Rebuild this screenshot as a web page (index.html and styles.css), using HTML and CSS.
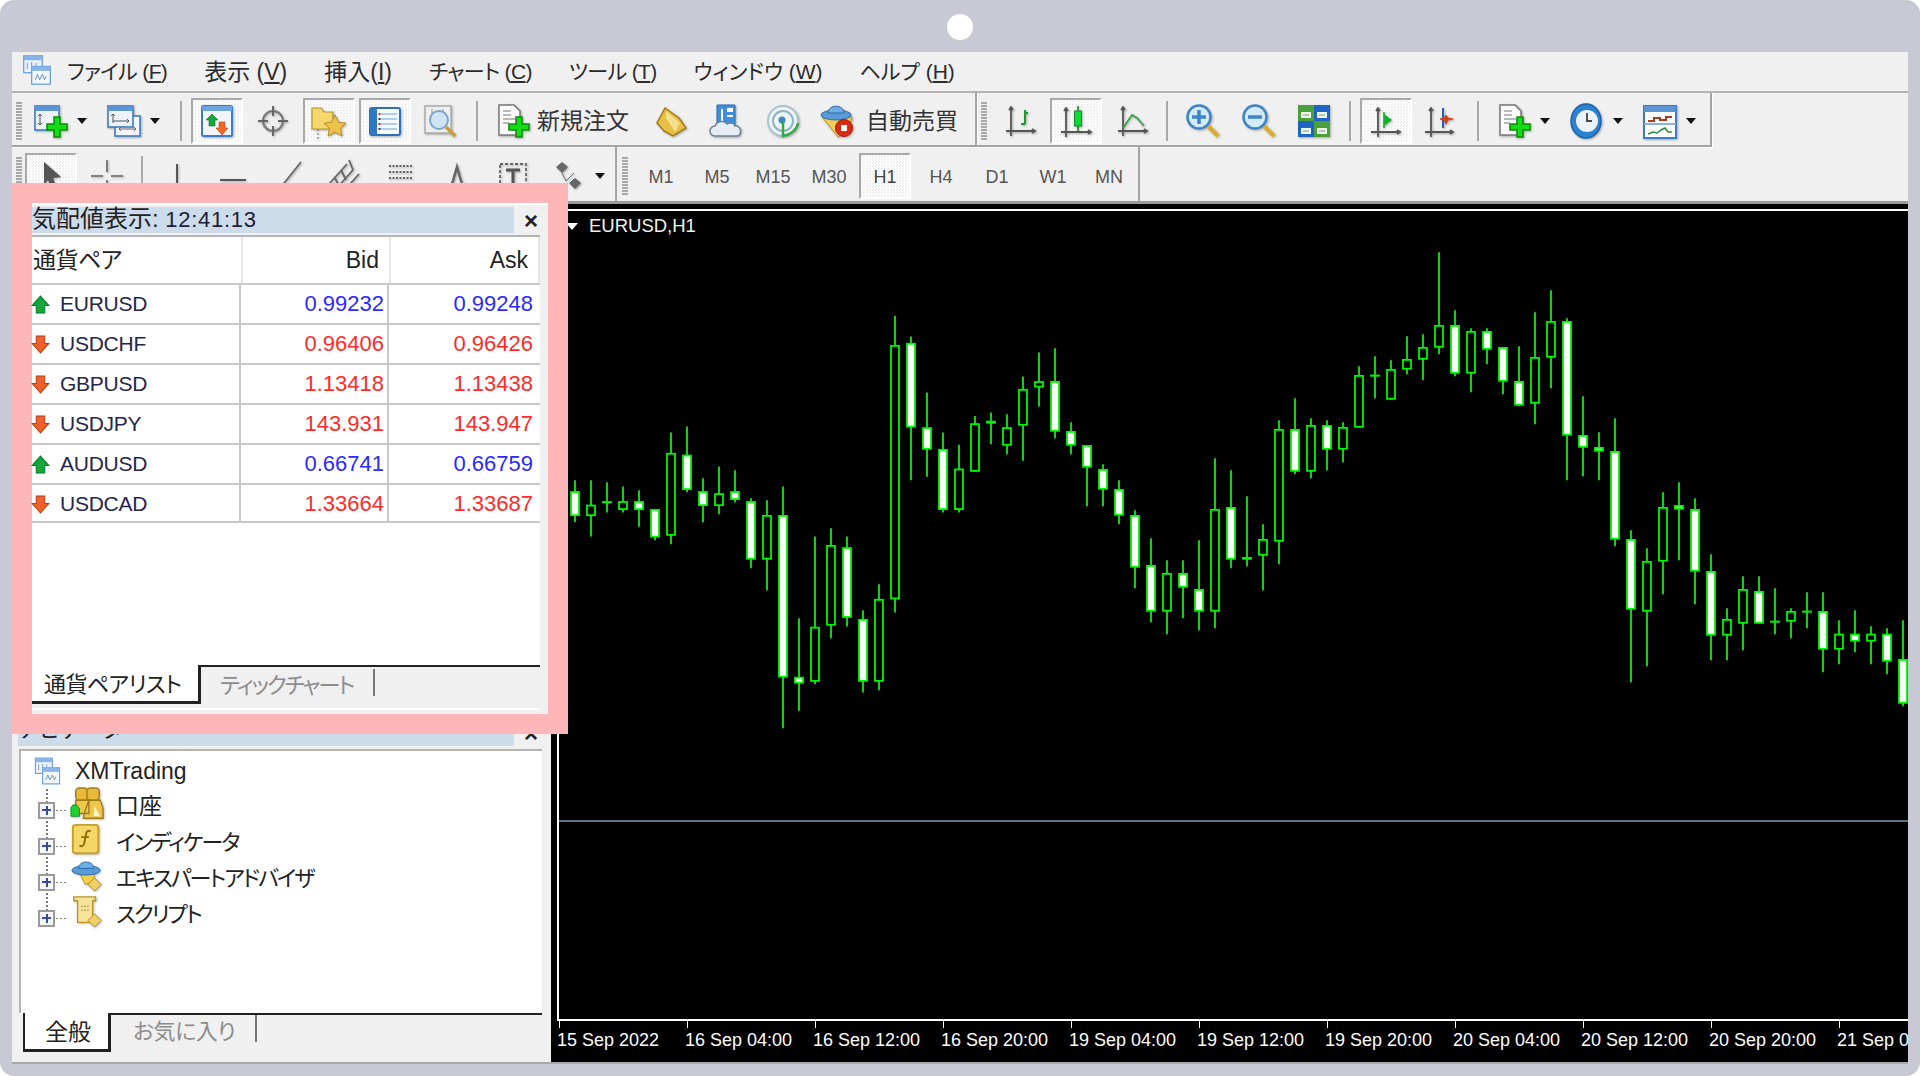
FILE: index.html
```html
<!DOCTYPE html>
<html lang="ja">
<head>
<meta charset="utf-8">
<title>MetaTrader 4</title>
<link rel="stylesheet" href="styles.css">
</head>
<body>
<svg class="defs" aria-hidden="true">
  <defs>
    <path id="plus" d="M7 0h6v7h7v6h-7v7H7v-7H0V7h7z" fill="#14dc14" stroke="#0a8f0a" stroke-width="1.6"/>
    <symbol id="s-app" viewBox="0 0 36 36">
      <rect x="3" y="2" width="21" height="19" fill="#eaf2fb" stroke="#6fa3dc" stroke-width="1.5"/><rect x="3" y="2" width="21" height="5" fill="#86b4e6"/>
      <path d="M7 10v7M12 9v7M17 10v6" stroke="#6b8fc0" fill="none"/>
      <rect x="12" y="14" width="21" height="20" fill="#f3f8fd" stroke="#6fa3dc" stroke-width="1.5"/><rect x="12" y="14" width="21" height="5" fill="#86b4e6"/>
      <path d="M16 29l2.500-6 2.500 6 3-6 2.500 6 2-4" stroke="#5a7fb0" fill="none"/>
    </symbol>
    <symbol id="s-new" viewBox="0 0 36 36">
      <rect x="2" y="3" width="24" height="24" fill="#edf3fa" stroke="#3d7cc0" stroke-width="1.6"/><rect x="2" y="3" width="24" height="5" fill="#5a94d4"/>
      <path d="M7 11v11M5 13l2-2 2 2M5 20l2 2 2-2" stroke="#555" fill="none"/>
      <use href="#plus" x="14" y="14"/>
    </symbol>
    <symbol id="s-prof" viewBox="0 0 36 36">
      <rect x="9" y="13" width="25" height="20" fill="#f2f6fb" stroke="#3d7cc0" stroke-width="1.6"/>
      <path d="M13 26h17M15 24l-2 2 2 2M28 24l2 2-2 2" stroke="#666" fill="none"/>
      <rect x="2" y="3" width="25" height="21" fill="#edf3fa" stroke="#3d7cc0" stroke-width="1.6"/><rect x="2" y="3" width="25" height="5" fill="#5a94d4"/>
      <path d="M7 11v9M5 13l2-2 2 2M7 18h16M21 16l2 2-2 2" stroke="#555" fill="none"/>
    </symbol>
    <symbol id="s-mw" viewBox="0 0 36 36">
      <rect x="3" y="3" width="30" height="30" rx="1.500" fill="#f1f5fa" stroke="#3d7cc0" stroke-width="2"/><rect x="3" y="3" width="30" height="5" fill="#6fa5de"/>
      <path d="M13 11l6 6h-3v6h-6v-6H7z" fill="#12a83c" stroke="#0b7a2a" stroke-width=".6"/>
      <path d="M20 19h6v6h3l-6 7-6-7h3z" fill="#f0672c" stroke="#b8431a" stroke-width=".6"/>
    </symbol>
    <symbol id="s-aim" viewBox="0 0 36 36">
      <circle cx="18" cy="18" r="10" fill="none" stroke="#777" stroke-width="2"/>
      <path d="M18 3v10M18 23v10M3 18h10M23 18h10" stroke="#666" stroke-width="2"/>
    </symbol>
    <symbol id="s-fav" viewBox="0 0 36 36">
      <path d="M7 26v10" stroke="#666" stroke-dasharray="2 2"/>
      <path d="M1 5h9l3 4h9v17H1z" fill="#f5d76e" stroke="#b89430" stroke-width="1.2"/>
      <path d="M24 12l3.600 7.200 7.400 1-5.400 5 1.400 7.800-7-3.800-7 3.800 1.400-7.800-5.400-5 7.400-1z" fill="#edc24a" stroke="#b0892a"/>
    </symbol>
    <symbol id="s-nav" viewBox="0 0 36 36">
      <rect x="3" y="5" width="30" height="27" rx="2" fill="#f6f9fd" stroke="#2f6fb8" stroke-width="2"/><rect x="3" y="5" width="7" height="27" fill="#2f77c4"/>
      <path d="M14 11h16M14 16h16M14 21h16M14 26h16" stroke="#9bbfe2" stroke-width="1.500"/>
      <path d="M11.500 10h2v2h-2zM11.500 20h2v2h-2z" fill="#e02020"/><path d="M11.500 15h2v2h-2zM11.500 25h2v2h-2z" fill="#333"/>
    </symbol>
    <symbol id="s-find" viewBox="0 0 36 36">
      <rect x="2" y="3" width="26" height="27" fill="#eee" stroke="#aaa" stroke-width="1.500"/>
      <path d="M9 6v12M20 6v12" stroke="#888"/>
      <circle cx="16" cy="17" r="9" fill="#cfe3f4" stroke="#7ba6c8" stroke-width="2"/>
      <path d="M23 24l9 9" stroke="#c9a02c" stroke-width="3.500"/>
    </symbol>
    <symbol id="s-order" viewBox="0 0 36 36">
      <path d="M4 2h15l6 6v24H4z" fill="#fbfbfb" stroke="#777" stroke-width="1.500"/>
      <path d="M8 8h8M8 12h8M8 16h12M8 20h6" stroke="#777"/>
      <use href="#plus" x="14" y="14"/>
    </symbol>
    <symbol id="s-gold" viewBox="0 0 36 36">
      <path d="M12 5l14 10 7 10-13 8-9-5-7-8z" fill="#e7bf46" stroke="#a47c16" stroke-width="1.500"/>
      <path d="M13 8l14 12-5 9-9-14z" fill="#f6e08c"/>
    </symbol>
    <symbol id="s-cloud" viewBox="0 0 36 36">
      <path d="M8 2h18v20H8z" fill="#3f8fe0" stroke="#2a6cb4"/><path d="M18 5h6v4h-6zM18 12h6v2h-6z" fill="#fff"/><path d="M13 6v13" stroke="#fff" stroke-width="2"/>
      <path d="M6 33a5 5 0 0 1 0-10c2-5 9-6 12-2 3-2 7-1 8 2 6-1 8 9 2 10z" fill="#e6ecf3" stroke="#6d8196" stroke-width="1.500"/>
    </symbol>
    <symbol id="s-signal" viewBox="0 0 36 36">
      <circle cx="18" cy="18" r="15" fill="#eef4f7" stroke="#a9c4cf" stroke-width="2"/>
      <circle cx="18" cy="18" r="10" fill="none" stroke="#8fb4c6" stroke-width="2"/>
      <circle cx="17" cy="17" r="3.500" fill="#3f87c4"/>
      <path d="M18 18v15c7-1 14-6 15-13" fill="none" stroke="#3aa64a" stroke-width="2.500"/>
    </symbol>
    <symbol id="s-auto" viewBox="0 0 36 36">
      <path d="M3 14L19 34l11-8 3-12z" fill="#f1cd55" stroke="#b8922a"/>
      <ellipse cx="17" cy="12" rx="15" ry="5" fill="#5a9ad8" stroke="#2d6aa6"/>
      <path d="M9 10c0-9 16-9 16 0z" fill="#6eaee6" stroke="#2d6aa6"/>
      <circle cx="25" cy="25" r="8.500" fill="#d92a12" stroke="#a31a0a"/><rect x="22" y="22" width="6" height="6" fill="#fff"/>
    </symbol>
    <symbol id="s-bar" viewBox="0 0 36 36">
      <path d="M9 4v29M4 28h29M7 7l2-3 2 3M30 26l3 2-3 2" stroke="#555" stroke-width="1.800" fill="none"/>
      <path d="M23 7v14M19 21h4M23 10h3" stroke="#1a9a2a" stroke-width="2" fill="none"/>
    </symbol>
    <symbol id="s-candle" viewBox="0 0 36 36">
      <path d="M8 5v29M3 29h30M6 8l2-3 2 3M30 27l3 2-3 2" stroke="#555" stroke-width="1.800" fill="none"/>
      <path d="M20 3v25" stroke="#1a7a2a" stroke-width="1.500"/><rect x="16.500" y="8" width="7" height="15" fill="#12d83c" stroke="#0d8f2a"/>
    </symbol>
    <symbol id="s-line" viewBox="0 0 36 36">
      <path d="M9 4v29M4 28h29M7 7l2-3 2 3M30 26l3 2-3 2" stroke="#555" stroke-width="1.800" fill="none"/>
      <path d="M9 25l9-13 5 3 7 8" stroke="#3aa04a" stroke-width="1.800" fill="none"/>
    </symbol>
    <symbol id="s-zin" viewBox="0 0 36 36">
      <circle cx="15" cy="14" r="11.500" fill="#d4ecfa" stroke="#3f85c6" stroke-width="2.500"/>
      <path d="M15 7v14M8 14h14" stroke="#3f85c6" stroke-width="3.500"/>
      <path d="M24 23l10 10" stroke="#d4ad32" stroke-width="4"/>
    </symbol>
    <symbol id="s-zout" viewBox="0 0 36 36">
      <circle cx="15" cy="14" r="11.500" fill="#d4ecfa" stroke="#3f85c6" stroke-width="2.500"/>
      <path d="M8 14h14" stroke="#3f85c6" stroke-width="3.500"/>
      <path d="M24 23l10 10" stroke="#d4ad32" stroke-width="4"/>
    </symbol>
    <symbol id="s-tile" viewBox="0 0 36 36">
      <rect x="2" y="2" width="16" height="16" fill="#4aa03a"/><rect x="18" y="2" width="16" height="16" fill="#1f64c0"/>
      <rect x="2" y="18" width="16" height="16" fill="#1f64c0"/><rect x="18" y="18" width="16" height="16" fill="#4aa03a"/>
      <path d="M5 9h10v6H5zM21 9h10v6H21zM5 25h10v6H5zM21 25h10v6H21z" fill="#eef4ee"/>
      <path d="M7 12h6M23 12h6M7 28h6M23 28h6" stroke="#7c9a7c"/>
    </symbol>
    <symbol id="s-auto-scroll" viewBox="0 0 36 36">
      <path d="M10 5v29M3 29h29M8 8l2-3 2 3M29 27l3 2-3 2" stroke="#555" stroke-width="1.800" fill="none"/>
      <path d="M16 9v16" stroke="#1a9a2a" stroke-width="1.500"/><path d="M16 11l8 6-8 6z" fill="#18b030"/>
    </symbol>
    <symbol id="s-shift" viewBox="0 0 36 36">
      <path d="M7 5v29M1 29h28M5 8l2-3 2 3M26 27l3 2-3 2" stroke="#555" stroke-width="1.800" fill="none"/>
      <path d="M19 5v20" stroke="#2a62b0" stroke-width="2"/>
      <path d="M22 12l2 3 5 1-5 1-2 4-2-4-4-1 4-1z" fill="#d8401a" stroke="#d8401a"/>
    </symbol>
    <symbol id="s-clock" viewBox="0 0 36 36">
      <ellipse cx="17" cy="18" rx="15" ry="17" fill="#2a82d0" stroke="#1a64ac" stroke-width="1.500"/>
      <circle cx="18" cy="18" r="11" fill="#edf3f8"/>
      <path d="M18 10v8h5" stroke="#444" stroke-width="1.800" fill="none"/>
    </symbol>
    <symbol id="s-tmpl" viewBox="0 0 36 36">
      <rect x="2" y="3" width="32" height="32" fill="#fff" stroke="#3d7cc0" stroke-width="2"/><rect x="2" y="3" width="32" height="6" fill="#5a94d4"/><rect x="2" y="20" width="32" height="2" fill="#8bb3dc"/>
      <path d="M6 18h6v-3h6v2h6v-3h6" stroke="#a83a1e" stroke-width="2" fill="none"/>
      <path d="M6 31l5-2 4 1 4-3 4-2 3 4h4" stroke="#2a8c3a" stroke-width="1.500" fill="none"/>
    </symbol>
    <symbol id="s-cursor" viewBox="0 0 36 36"><path d="M11 4l17 15-8 1 5 12-5 2-5-12-4 5z" fill="#555"/></symbol>
    <symbol id="s-cross" viewBox="0 0 36 36"><path d="M18 2v12M18 22v12M2 18h12M22 18h12" stroke="#666" stroke-width="1.600"/></symbol>
    <symbol id="s-vl" viewBox="0 0 36 36"><path d="M18 6v28" stroke="#555" stroke-width="2"/></symbol>
    <symbol id="s-hl" viewBox="0 0 36 36"><path d="M5 22h26" stroke="#555" stroke-width="2"/></symbol>
    <symbol id="s-dl" viewBox="0 0 36 36"><path d="M6 34L30 4" stroke="#666" stroke-width="1.800"/></symbol>
    <symbol id="s-chan" viewBox="0 0 36 36"><path d="M2 26L20 6M8 32L26 12M14 36L32 16M22 2l4 10M14 12l5 10M8 20l4 8" stroke="#666" stroke-width="1.800" fill="none"/></symbol>
    <symbol id="s-fib" viewBox="0 0 36 36"><path d="M6 8h24M6 14h24M6 20h24M6 26h24" stroke="#666" stroke-width="1.800" stroke-dasharray="2 1.500"/></symbol>
    <symbol id="s-tri" viewBox="0 0 36 36"><path d="M18 9l7 24H11z" fill="none" stroke="#666" stroke-width="2.500"/></symbol>
    <symbol id="s-tbox" viewBox="0 0 36 36"><path d="M5 6h26v26H5z" fill="none" stroke="#666" stroke-width="1.800" stroke-dasharray="3 2"/><path d="M11 12h14M18 12v20" stroke="#555" stroke-width="3"/></symbol>
    <symbol id="s-shapes" viewBox="0 0 36 36"><path d="M11 4l6 5-6 6-6-6zM24 20l6 5-6 6-6-6z" fill="#666"/><path d="M11 15l4 8 8-8" stroke="#666" fill="none"/></symbol>
    <symbol id="s-up" viewBox="0 0 18 18"><path d="M9 1l8 9h-4v7H5v-7H1z" fill="#12a83c" stroke="#0b7a2a"/></symbol>
    <symbol id="s-down" viewBox="0 0 18 18"><path d="M5 1h8v7h4l-8 9-8-9h4z" fill="#f0602a" stroke="#b8431a"/></symbol>
    <symbol id="s-acct" viewBox="0 0 36 36">
      <rect x="6" y="1" width="13" height="13" rx="4" fill="#e8b93c" stroke="#a07c18" stroke-width="1.500"/>
      <rect x="18" y="1" width="13" height="13" rx="4" fill="#e8b93c" stroke="#a07c18" stroke-width="1.500"/>
      <path d="M6 14h14v14H6zM20 14h12l3 8v11H14l2-8z" fill="#edc64e" stroke="#a07c18" stroke-width="1.500"/>
      <path d="M26 20l6 11h-7z" fill="#fff3c0"/>
      <path d="M3 19h4l3 4v8H1v-9z" fill="#20d030" stroke="#12902a"/>
    </symbol>
    <symbol id="s-func" viewBox="0 0 36 36">
      <rect x="3" y="2" width="27" height="30" rx="3" fill="#f5d767" stroke="#c29f30" stroke-width="2"/>
      <path d="M22 9c-3-2-5 0-5 3l-2 10c-1 3-3 3-5 2M12 15h8" stroke="#8a6a10" stroke-width="2" fill="none"/>
    </symbol>
    <symbol id="s-expert" viewBox="0 0 36 36">
      <path d="M10 14l6 13 8-3 3-10z" fill="#f3d148" stroke="#b8922a"/>
      <ellipse cx="17" cy="12" rx="15" ry="5" fill="#5a9ad8" stroke="#2d6aa6"/>
      <path d="M9 10c0-9 16-9 16 0z" fill="#6eaee6" stroke="#2d6aa6"/>
      <path d="M26 20l7 7-7 7-7-7z" fill="#f0cf66" stroke="#b08a20"/>
    </symbol>
    <symbol id="s-script" viewBox="0 0 36 36">
      <path d="M4 2h23v4h-3v19l-3 4H8V6H4z" fill="#f7e39a" stroke="#b8962c" stroke-width="1.500"/>
      <path d="M12 12h8M12 16h8" stroke="#a08a40" stroke-dasharray="2 1"/>
      <path d="M26 20l7 7-7 7-7-7z" fill="#f0cf66" stroke="#b08a20"/>
    </symbol>
  </defs>
</svg>

<div class="frame">
  <div class="camera"></div>
  <div class="window">
    <nav class="menubar">
      <svg class="app-logo"><use href="#s-app"/></svg>
      <span class="menu-item kana">ファイル (<u>F</u>)</span>
      <span class="menu-item kanji">表示 (<u>V</u>)</span>
      <span class="menu-item kanji">挿入(<u>I</u>)</span>
      <span class="menu-item kana">チャート (<u>C</u>)</span>
      <span class="menu-item kana">ツール (<u>T</u>)</span>
      <span class="menu-item">ウィンドウ (<u>W</u>)</span>
      <span class="menu-item">ヘルプ (<u>H</u>)</span>
    </nav>

    <div class="toolrow">
      <div class="tb tb-main">
        <i class="grip"></i>
        <button class="btn"><svg class="ico"><use href="#s-new"/></svg></button><i class="arrow"></i>
        <button class="btn"><svg class="ico"><use href="#s-prof"/></svg></button><i class="arrow"></i>
        <i class="sep sep-wide"></i>
        <button class="btn on"><svg class="ico"><use href="#s-mw"/></svg></button>
        <button class="btn"><svg class="ico"><use href="#s-aim"/></svg></button>
        <button class="btn on"><svg class="ico"><use href="#s-fav"/></svg></button>
        <button class="btn on"><svg class="ico"><use href="#s-nav"/></svg></button>
        <button class="btn"><svg class="ico"><use href="#s-find"/></svg></button>
        <i class="sep sep-mid"></i>
        <button class="btn"><svg class="ico"><use href="#s-order"/></svg></button>
        <span class="tb-label">新規注文</span>
        <button class="btn after-label"><svg class="ico"><use href="#s-gold"/></svg></button>
        <button class="btn"><svg class="ico"><use href="#s-cloud"/></svg></button>
        <button class="btn"><svg class="ico"><use href="#s-signal"/></svg></button>
        <button class="btn btn-pull"><svg class="ico"><use href="#s-auto"/></svg></button>
        <span class="tb-label label-auto">自動売買</span>
      </div>
      <div class="tb tb-chart">
        <i class="grip"></i>
        <button class="btn"><svg class="ico"><use href="#s-bar"/></svg></button>
        <button class="btn on"><svg class="ico"><use href="#s-candle"/></svg></button>
        <button class="btn"><svg class="ico"><use href="#s-line"/></svg></button>
        <i class="sep"></i>
        <button class="btn"><svg class="ico"><use href="#s-zin"/></svg></button>
        <button class="btn"><svg class="ico"><use href="#s-zout"/></svg></button>
        <button class="btn"><svg class="ico"><use href="#s-tile"/></svg></button>
        <i class="sep sep-mid"></i>
        <button class="btn on"><svg class="ico"><use href="#s-auto-scroll"/></svg></button>
        <button class="btn"><svg class="ico"><use href="#s-shift"/></svg></button>
        <i class="sep sep-mid"></i>
        <button class="btn"><svg class="ico"><use href="#s-order"/></svg></button><i class="arrow"></i>
        <button class="btn"><svg class="ico"><use href="#s-clock"/></svg></button><i class="arrow"></i>
        <button class="btn"><svg class="ico"><use href="#s-tmpl"/></svg></button><i class="arrow arrow-last"></i>
      </div>
    </div>

    <div class="toolrow">
      <div class="tb tb-draw">
        <i class="grip"></i>
        <button class="btn on"><svg class="ico"><use href="#s-cursor"/></svg></button>
        <button class="btn"><svg class="ico"><use href="#s-cross"/></svg></button>
        <i class="sep"></i>
        <button class="btn"><svg class="ico"><use href="#s-vl"/></svg></button>
        <button class="btn"><svg class="ico"><use href="#s-hl"/></svg></button>
        <button class="btn"><svg class="ico"><use href="#s-dl"/></svg></button>
        <button class="btn"><svg class="ico"><use href="#s-chan"/></svg></button>
        <button class="btn"><svg class="ico"><use href="#s-fib"/></svg></button>
        <button class="btn"><svg class="ico"><use href="#s-tri"/></svg></button>
        <button class="btn"><svg class="ico"><use href="#s-tbox"/></svg></button>
        <button class="btn"><svg class="ico"><use href="#s-shapes"/></svg></button><i class="arrow arrow-last"></i>
      </div>
      <div class="tb tb-period">
        <i class="grip"></i>
        <button class="btn txt">M1</button>
        <button class="btn txt">M5</button>
        <button class="btn txt">M15</button>
        <button class="btn txt">M30</button>
        <button class="btn txt on">H1</button>
        <button class="btn txt">H4</button>
        <button class="btn txt">D1</button>
        <button class="btn txt">W1</button>
        <button class="btn txt">MN</button>
      </div>
    </div>

    <main class="workspace">
      <aside class="side">
        <section class="watch">
          <header class="panel-head">
            <div class="panel-title">気配値表示: <span class="clock">12:41:13</span></div>
            <span class="panel-close">×</span>
          </header>
          <div class="watch-body">
            <div class="watch-head">
              <div class="hc hc-name">通貨ペア</div>
              <div class="hc">Bid</div>
              <div class="hc">Ask</div>
            </div>
            <div class="quote up"><div class="sym"><svg class="dir"><use href="#s-up"/></svg>EURUSD</div><div class="px">0.99232</div><div class="px">0.99248</div></div>
            <div class="quote down"><div class="sym"><svg class="dir"><use href="#s-down"/></svg>USDCHF</div><div class="px">0.96406</div><div class="px">0.96426</div></div>
            <div class="quote down"><div class="sym"><svg class="dir"><use href="#s-down"/></svg>GBPUSD</div><div class="px">1.13418</div><div class="px">1.13438</div></div>
            <div class="quote down"><div class="sym"><svg class="dir"><use href="#s-down"/></svg>USDJPY</div><div class="px">143.931</div><div class="px">143.947</div></div>
            <div class="quote up"><div class="sym"><svg class="dir"><use href="#s-up"/></svg>AUDUSD</div><div class="px">0.66741</div><div class="px">0.66759</div></div>
            <div class="quote down"><div class="sym"><svg class="dir"><use href="#s-down"/></svg>USDCAD</div><div class="px">1.33664</div><div class="px">1.33687</div></div>
          </div>
          <div class="tabs">
            <span class="tab active tab-pairs">通貨ペアリスト</span>
            <div class="tab-rest"><span class="tab-off tab-off-tick">ティックチャート</span><i class="tab-sep"></i></div>
          </div>
        </section>

        <section class="navigator">
          <header class="panel-head">
            <div class="panel-title nav-title">ナビゲータ</div>
            <span class="panel-close">×</span>
          </header>
          <div class="tree">
            <div class="tree-root"><svg class="tree-logo"><use href="#s-app"/></svg>XMTrading</div>
            <div class="tree-item"><span class="twig"><i class="expander"></i></span><i class="dots"></i><svg class="tree-ico"><use href="#s-acct"/></svg><span class="tree-text tree-kanji">口座</span></div>
            <div class="tree-item"><span class="twig"><i class="expander"></i></span><i class="dots"></i><svg class="tree-ico"><use href="#s-func"/></svg><span class="tree-text">インディケータ</span></div>
            <div class="tree-item"><span class="twig"><i class="expander"></i></span><i class="dots"></i><svg class="tree-ico"><use href="#s-expert"/></svg><span class="tree-text">エキスパートアドバイザ</span></div>
            <div class="tree-item"><span class="twig twig-end"><i class="expander"></i></span><i class="dots"></i><svg class="tree-ico"><use href="#s-script"/></svg><span class="tree-text">スクリプト</span></div>
          </div>
          <div class="tabs nav-tabs">
            <span class="tab active tab-all">全般</span>
            <div class="tab-rest"><span class="tab-off tab-off-fav">お気に入り</span><i class="tab-sep"></i></div>
          </div>
        </section>
      </aside>

      <section class="chart">
        <div class="plot">
          <svg id="candles" class="candles" width="1351" height="812" viewBox="557 209 1351 812"></svg>
          <div class="chart-label"><i class="chart-tri"></i>EURUSD,H1</div>
        </div>
        <div class="axis">
          <span class="tick">15 Sep 2022</span>
          <span class="tick">16 Sep 04:00</span>
          <span class="tick">16 Sep 12:00</span>
          <span class="tick">16 Sep 20:00</span>
          <span class="tick">19 Sep 04:00</span>
          <span class="tick">19 Sep 12:00</span>
          <span class="tick">19 Sep 20:00</span>
          <span class="tick">20 Sep 04:00</span>
          <span class="tick">20 Sep 12:00</span>
          <span class="tick">20 Sep 20:00</span>
          <span class="tick">21 Sep 04:00</span>
        </div>
      </section>
    </main>
  </div>
</div>
<script src="chart.js"></script>
</body>
</html>
```
FILE: styles.css
```css
* { box-sizing: border-box; }
html, body { margin: 0; height: 100%; background: #fff; overflow: hidden; }
body {
  font-family: "Liberation Sans", "Noto Sans CJK JP", sans-serif;
  font-size: 22px;
  color: #222;
  font-feature-settings: "palt";
}
.defs { display: none; }
i { display: block; font-style: normal; }

.frame {
  height: 1076px;
  background: #c8c9d5;
  border-radius: 14px;
  padding: 0 12px 12px;
  overflow: hidden;
}
.camera {
  width: 26px;
  height: 26px;
  margin: 14px auto 12px;
  background: #fff;
  border-radius: 50%;
}
.window {
  height: 1012px;
  background: #f0f0f0;
  display: flex;
  flex-direction: column;
  border-bottom: 2px solid #a8a8a8;
}

/* menu */
.menubar {
  height: 41px;
  flex: none;
  display: flex;
  align-items: center;
  gap: 37px;
  padding: 0 0 3px 9px;
  border-bottom: 2px solid #b4b4b4;
  font-size: 21px;
  color: #2b2b2b;
}
.app-logo { width: 32px; height: 34px; margin-right: -23px; flex: none; }
.menu-item { white-space: nowrap; }
.menu-item.kana { letter-spacing: -.65px; }
.menu-item.kanji { font-size: 23px; }

/* toolbars */
.toolrow { display: flex; height: 54px; flex: none; }
.tb {
  display: flex;
  align-items: center;
  padding-top: 4px;
  border-right: 2px solid #a4a4a4;
  border-bottom: 2px solid #a4a4a4;
  box-shadow: 1px 1px 0 #fff;
}
.tb-main { width: 965px; }
.tb-chart { width: 735px; }
.tb-draw { width: 605px; }
.tb-period { width: 522px; margin-left: 1px; }
.tb-draw, .tb-period { border-bottom: 0; box-shadow: none; }
.grip {
  width: 6px;
  height: 38px;
  margin: 0 1px 0 4px;
  flex: none;
  background: repeating-linear-gradient(#a8a8a8 0 2px, transparent 2px 3px);
}
.tb-chart .grip { margin-right: 5px; }
.tb-period .grip { margin-right: 5px; margin-left: 4px; }
.btn {
  width: 52px;
  height: 46px;
  margin: 0 2px;
  padding: 0;
  flex: none;
  display: flex;
  align-items: center;
  justify-content: center;
  border: 2px solid transparent;
  background: none;
  font: inherit;
}
.btn.on {
  border-color: #a8a8a8 #fff #fff #a8a8a8;
  background: repeating-conic-gradient(#fff 0 25%, #efefef 0 50%) 0 0 / 3px 3px;
}
.btn.txt { font-size: 18px; color: #555; padding-top: 3px; }
.btn.txt.on { color: #444; }
.btn-pull { margin-left: 0; }
.ico { width: 36px; height: 36px; display: block; filter: drop-shadow(1px 1px 1px rgba(0, 0, 0, .3)); }
.arrow {
  width: 0;
  height: 0;
  margin: 0 9px 0 -2px;
  flex: none;
  border-left: 5px solid transparent;
  border-right: 5px solid transparent;
  border-top: 6px solid #111;
}
.arrow-last { margin-right: 0; }
.sep {
  width: 2px;
  height: 40px;
  margin: 0 6px;
  flex: none;
  background: #a8a8a8;
}
.sep-mid { margin: 0 7px; }
.sep-wide { margin: 0 7px 0 11px; }
.tb-label {
  font-size: 23px;
  color: #333;
  white-space: nowrap;
  margin: 0 0 4px -4px;
  font-feature-settings: normal;
}
.label-auto { margin-left: 1px; }
.after-label { margin-left: 16px; }

/* workspace */
.workspace {
  flex: 1;
  min-height: 0;
  display: flex;
  border-top: 3px solid #9a9a9a;
}
.side {
  width: 536px;
  flex: none;
  display: flex;
  flex-direction: column;
}
.watch {
  position: relative;
  z-index: 2;
  width: 516px;
  height: 511px;
  margin: -1px 0 0 20px;
  flex: none;
  display: flex;
  flex-direction: column;
  padding-top: 2px;
  background: #f0f0f0;
  border-top: 2px solid #fff;
  box-shadow: 0 0 0 20px #ffb6b8;
}
.panel-head {
  height: 26px;
  flex: none;
  display: flex;
  align-items: center;
  margin-bottom: 2px;
}
.panel-title {
  width: 482px;
  height: 26px;
  line-height: 23px;
  background: #cddcea;
  font-size: 24px;
  white-space: nowrap;
  flex: none;
}
.clock { font-size: 22px; color: #1d1d3a; letter-spacing: .7px; }
.panel-close { flex: 1; text-align: center; font-weight: bold; font-size: 24px; line-height: 23px; }
.watch-body {
  flex: 1;
  margin-right: 8px;
  background: #fff;
  border-top: 2px solid #b4b4b4;
}
.watch-head {
  display: grid;
  grid-template-columns: 211px 148px 149px;
  height: 48px;
  border-bottom: 2px solid #c8c8c8;
}
.hc {
  text-align: right;
  padding: 9px 10px 0 0;
  border-right: 2px solid #e6e6e6;
  font-size: 23px;
  line-height: 28px;
}
.hc-name { text-align: left; padding-left: 1px; font-size: 23px; letter-spacing: -.5px; }
.quote {
  display: grid;
  grid-template-columns: 209px 148px 151px;
  height: 40px;
  border-bottom: 2px solid #c8c8c8;
}
.quote:last-child { height: 38px; }
.sym {
  display: flex;
  align-items: center;
  font-size: 21px;
  color: #26264a;
  letter-spacing: -.25px;
  border-right: 2px solid #c8c8c8;
}
.dir { width: 19px; height: 19px; margin: 0 10px 0 -1px; flex: none; }
.px {
  text-align: right;
  padding-right: 3px;
  font-size: 22px;
  line-height: 38px;
  border-right: 2px solid #c8c8c8;
}
.px:last-child { border-right: 0; padding-right: 7px; }
.up .px { color: #2a2aff; }
.down .px { color: #ff2a2a; }

/* tabs */
.tabs {
  height: 45px;
  flex: none;
  display: flex;
  margin: 0 8px 4px 0;
  border-bottom: 2px solid #fff;
}
.tab {
  height: 39px;
  flex: none;
  display: flex;
  align-items: center;
  padding-bottom: 3px;
  background: #fff;
  border-right: 3px solid #222;
  border-bottom: 3px solid #222;
}
.tab-pairs { width: 169px; padding-left: 12px; font-size: 22px; letter-spacing: -.6px; }
.tab-rest {
  flex: 1;
  height: 43px;
  display: flex;
  align-items: center;
  border-top: 2px solid #222;
  padding-bottom: 10px;
}
.tab-off { margin-left: 19px; color: #8c8c8c; font-size: 22px; white-space: nowrap; }
.tab-off-tick { letter-spacing: -2px; }
.tab-sep { width: 2px; height: 27px; background: #777; margin-left: 20px; }

/* navigator */
.navigator {
  flex: 1;
  min-height: 0;
  display: flex;
  flex-direction: column;
  padding: 6px 0 0 6px;
}
.nav-title { width: 496px; line-height: 20px; font-size: 22px; }
.navigator .panel-head { margin-bottom: 3px; }
.tree {
  flex: 1;
  margin: 0 6px 0 1px;
  background: #fff;
  border-top: 2px solid #b4b4b4;
  border-left: 2px solid #b4b4b4;
}
.tree-root {
  height: 36px;
  display: flex;
  align-items: center;
  gap: 13px;
  padding-left: 12px;
  font-size: 23px;
  margin-top: 2px;
}
.tree-logo { width: 29px; height: 30px; flex: none; }
.tree-item {
  height: 36px;
  display: flex;
  align-items: center;
  padding-left: 16px;
  font-size: 22px;
  white-space: nowrap;
}
.twig {
  width: 19px;
  height: 36px;
  flex: none;
  display: flex;
  align-items: center;
  justify-content: center;
  padding-top: 6px;
  background: repeating-linear-gradient(#777 0 2px, transparent 2px 4px) center top / 2px 100% no-repeat;
}
.twig-end { background-size: 2px 50%; }
.expander {
  width: 17px;
  height: 17px;
  border: 2px solid #9a9a9a;
  background:
    linear-gradient(#3a4a9c, #3a4a9c) center / 9px 2px no-repeat,
    linear-gradient(#3a4a9c, #3a4a9c) center / 2px 9px no-repeat,
    #f6f6f6;
}
.dots {
  width: 12px;
  height: 1px;
  margin-top: 6px;
  flex: none;
  background: repeating-linear-gradient(90deg, #888 0 2px, transparent 2px 4px);
}
.tree-ico { width: 34px; height: 34px; margin: 0 12px 7px 2px; flex: none; filter: drop-shadow(1px 1px 1px rgba(0, 0, 0, .25)); }
.tree-text { letter-spacing: -2px; margin-bottom: 7px; }
.tree-text.tree-kanji { letter-spacing: 0; font-size: 23px; }
.nav-tabs { margin: 0 6px 0 5px; height: 49px; border-bottom: 0; }
.tab-all { width: 88px; padding-left: 20px; border-left: 2px solid #222; height: 39px; font-size: 23px; }
.tab-off-fav { margin-left: 22px; letter-spacing: -.5px; }
.nav-tabs .tab-rest { padding-bottom: 10px; height: 39px; }

/* chart */
.chart {
  flex: 1;
  min-width: 0;
  margin-left: 3px;
  background: #000;
  padding: 5px 0 0 6px;
  display: flex;
  flex-direction: column;
  overflow: hidden;
}
.plot {
  position: relative;
  height: 812px;
  flex: none;
  border-top: 2px solid #fff;
  border-left: 2px solid #fff;
  overflow: hidden;
}
.candles { display: block; margin: -2px 0 0 -2px; }
.chart-label {
  position: absolute;
  left: 30px;
  top: 4px;
  font-size: 18.500px;
  line-height: 22px;
  color: #f0f0f0;
  font-feature-settings: normal;
}
.chart-tri {
  position: absolute;
  left: -23px;
  top: 8px;
  width: 0;
  height: 0;
  border-left: 6px solid transparent;
  border-right: 6px solid transparent;
  border-top: 7px solid #fff;
}
.axis {
  flex: 1;
  display: flex;
  overflow: hidden;
  border-top: 2px solid #fff;
  margin-top: -2px;
}
.tick {
  position: relative;
  width: 128px;
  flex: none;
  padding-top: 8px;
  color: #fff;
  font-size: 18px;
  line-height: 22px;
  white-space: nowrap;
  font-feature-settings: normal;
}
.tick::before {
  content: "";
  position: absolute;
  left: 2px;
  top: 0;
  width: 1px;
  height: 7px;
  background: #fff;
}
```
FILE: chart.js
```js
// Candle series, grouped by the sample block they were read from:
// [wick top, body top, body bottom, wick bottom, kind] with w = white, h = hollow, d = doji
var blocks = [
  { x: 575, y0: 200, k: 2.8, rows: [
    [785,815,885,902,'w'],[785,853,885,942,'h'],[790,843,849,875,'d'],[802,843,868,875,'h'],[813,843,868,915,'w'],
    [865,865,945,953,'w'],[651,708,940,964,'h'],[634,713,812,818,'w'],[779,815,857,902,'w'],[746,821,857,880,'h'],
    [757,815,840,847,'w'],[835,843,1007,1031,'w'],[841,882,1007,1093,'h'],[802,882,1337,1479,'w'],[1171,1335,1354,1430,'w'],
    [942,1195,1349,1356,'h'],[919,966,1192,1227,'h'],[942,972,1170,1194,'w'],[1149,1173,1349,1379,'w'],[1076,1117,1349,1373,'h'],
    [325,406,1118,1155,'h'],[382,400,637,785,'w'],[539,636,699,775,'w'],[651,697,868,875,'w'],[685,752,868,875,'h'],
    [605,625,761,761,'h'],[595,618,626,684,'d'],[600,636,688,712,'h'],[494,529,632,730,'h'],[427,507,525,578,'h']
  ]},
  { x: 1055, y0: 230, k: 3, rows: [
    [355,453,605,625,'w'],[577,603,647,673,'w'],[645,645,713,829,'w'],[703,717,779,829,'w'],[751,777,857,883,'w'],
    [841,855,1013,1075,'w'],[925,1005,1145,1177,'w'],[991,1029,1145,1213,'h'],[991,1029,1073,1165,'w'],[931,1077,1145,1201,'w'],
    [685,837,1145,1195,'h'],[721,831,989,1015,'w'],[799,981,989,1009,'d'],[883,927,977,1081,'h'],[571,597,935,1003,'h'],
    [505,597,725,733,'w'],[565,585,725,745,'h'],[571,585,659,721,'w'],[577,591,659,697,'h'],[409,435,593,593,'h'],
    [379,434,437,505,'d'],[391,417,509,509,'h'],[319,387,419,433,'h'],[313,351,389,451,'h'],[67,285,353,373,'h'],
    [241,285,431,439,'w'],[295,303,431,487,'h'],[295,303,359,403,'w'],[351,351,455,493,'w'],[349,453,527,527,'w'],
    [247,381,521,583,'h']
  ]},
  { x: 1551, y0: 240, k: 3, rows: [
    [151,243,353,445,'h'],[235,243,587,721,'w'],[469,585,623,709,'w'],[577,621,635,721,'w'],[535,633,899,919,'w'],
    [871,897,1109,1327,'w'],[925,963,1115,1279,'h'],[757,801,965,1063,'h'],[727,795,809,961,'w'],[775,807,995,1093,'w'],
    [943,993,1187,1261,'w'],[1105,1137,1187,1261,'h'],[1009,1047,1151,1231,'h'],[1009,1053,1151,1151,'w'],[1045,1142,1145,1183,'d'],
    [1105,1113,1145,1195,'h'],[1057,1112,1115,1165,'d'],[1057,1113,1229,1297,'w'],[1141,1181,1229,1273,'h'],[1111,1181,1205,1237,'w'],
    [1159,1181,1205,1273,'h'],[1165,1181,1265,1303,'w'],[1141,1257,1391,1399,'w']
  ]}
];

var SVG = 'http://www.w3.org/2000/svg';
var GREEN = '#00f500';
var svg = document.getElementById('candles');

function add(tag, attrs) {
  var el = document.createElementNS(SVG, tag);
  for (var key in attrs) el.setAttribute(key, attrs[key]);
  svg.appendChild(el);
}

add('line', { x1: 557, x2: 1908, y1: 821, y2: 821, stroke: '#5f7484', 'stroke-width': 2 });

blocks.forEach(function (block) {
  block.rows.forEach(function (row, i) {
    var x = block.x + i * 16;
    var y = function (v) { return block.y0 + v / block.k; };
    add('line', { x1: x, x2: x, y1: y(row[0]), y2: y(row[3]), stroke: GREEN, 'stroke-width': 1.8 });
    var fill = row[4] === 'w' ? '#fff' : row[4] === 'd' ? GREEN : '#000';
    var top = y(row[1]) + 0.9;
    var height = Math.max(y(row[2]) - y(row[1]) - 1.8, 0.2);
    add('rect', { x: x - 4, y: top, width: 8, height: height, fill: fill, stroke: GREEN, 'stroke-width': 1.8 });
  });
});
```
